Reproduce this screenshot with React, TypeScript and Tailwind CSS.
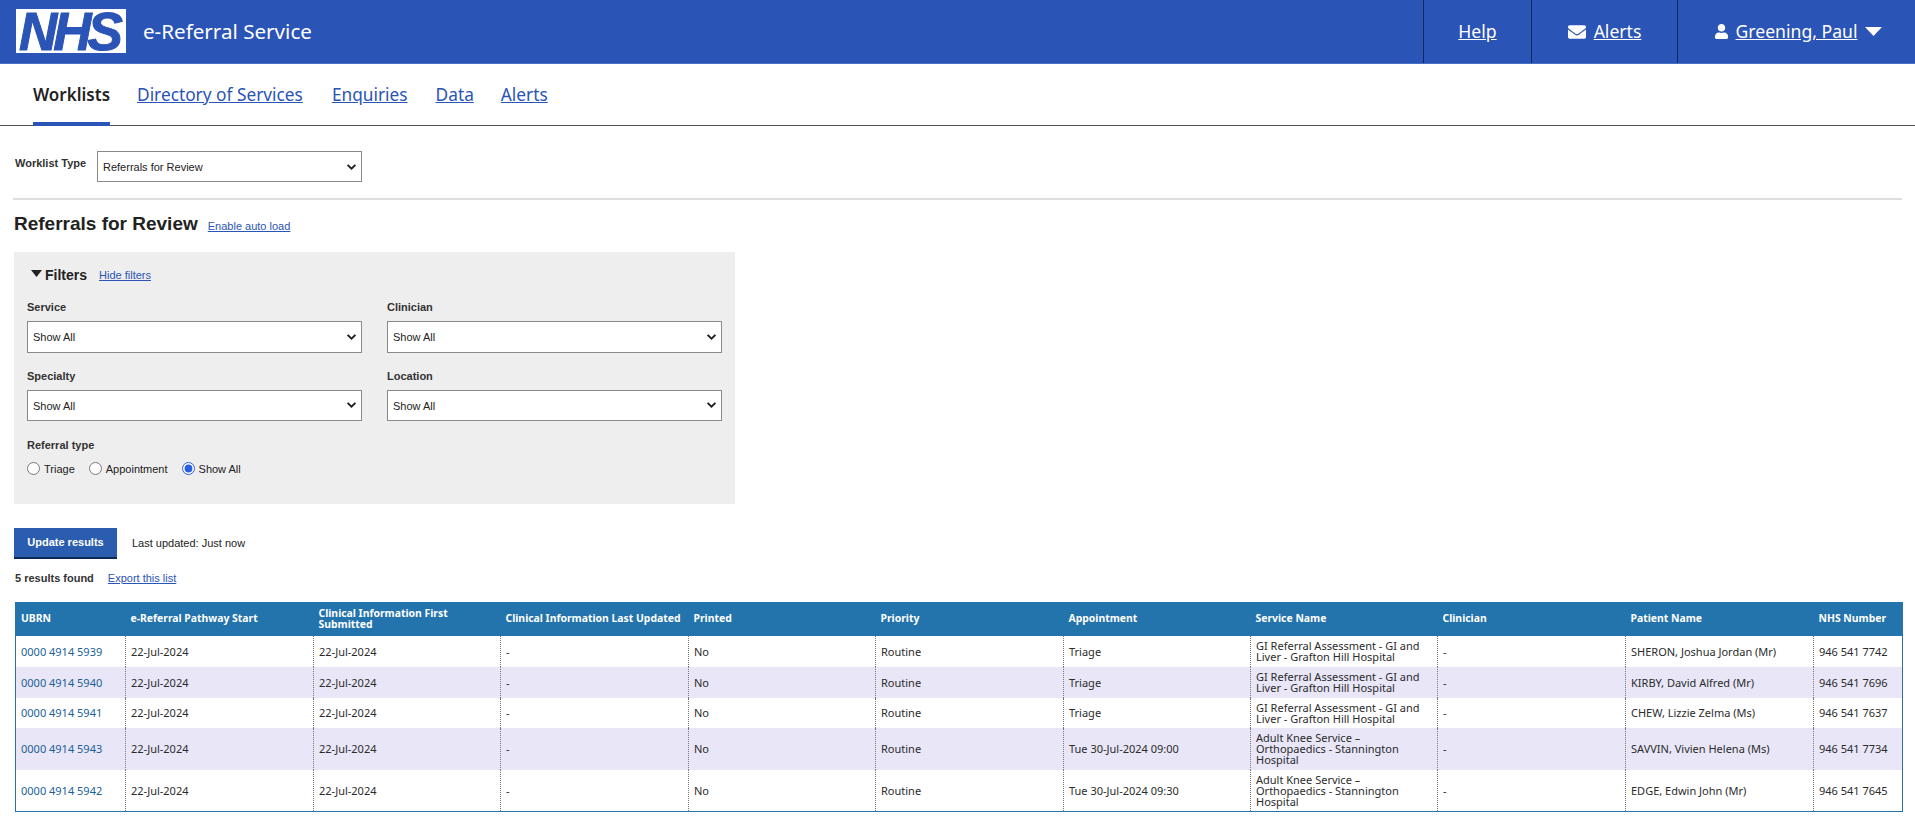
import { FaEnvelope, FaUser } from "react-icons/fa";

type Row = {
  ubrn: string,
  appointment: string,
  service: string[],
  patient: string,
  nhs: string,
}

const GI = ["GI Referral Assessment - GI and", "Liver - Grafton Hill Hospital"];
const KNEE = ["Adult Knee Service –", "Orthopaedics - Stannington", "Hospital"];

const rows: Row[] = [
  { ubrn: "0000 4914 5939", appointment: "Triage", service: GI, patient: "SHERON, Joshua Jordan (Mr)", nhs: "946 541 7742" },
  { ubrn: "0000 4914 5940", appointment: "Triage", service: GI, patient: "KIRBY, David Alfred (Mr)", nhs: "946 541 7696" },
  { ubrn: "0000 4914 5941", appointment: "Triage", service: GI, patient: "CHEW, Lizzie Zelma (Ms)", nhs: "946 541 7637" },
  { ubrn: "0000 4914 5943", appointment: "Tue 30-Jul-2024 09:00", service: KNEE, patient: "SAVVIN, Vivien Helena (Ms)", nhs: "946 541 7734" },
  { ubrn: "0000 4914 5942", appointment: "Tue 30-Jul-2024 09:30", service: KNEE, patient: "EDGE, Edwin John (Mr)", nhs: "946 541 7645" },
];

const headers = [
  { label: "UBRN", w: "w-[110px]" },
  { label: "e-Referral Pathway Start", w: "w-[188px]" },
  { label: "Clinical Information First Submitted", w: "w-[187px]" },
  { label: "Clinical Information Last Updated", w: "w-[188px]" },
  { label: "Printed", w: "w-[187px]" },
  { label: "Priority", w: "w-[188px]" },
  { label: "Appointment", w: "w-[187px]" },
  { label: "Service Name", w: "w-[187px]" },
  { label: "Clinician", w: "w-[188px]" },
  { label: "Patient Name", w: "w-[188px]" },
  { label: "NHS Number", w: "w-[89px]" },
];

const Chevron = () => (
  <svg viewBox="0 0 12 8" className="pointer-events-none absolute right-[5px] top-1/2 h-[7px] w-[11px] -translate-y-1/2">
    <path d="M1.5 1.5 L6 6 L10.5 1.5" fill="none" stroke="#222" strokeWidth="2.2" />
  </svg>
);

const Select = ({ value, className }: { value: string, className: string }) => (
  <div className={`relative ${className}`}>
    <select
      defaultValue={value}
      className="h-full w-full appearance-none border border-[#8a8a8a] bg-white pl-[5px] pt-[2px] text-[11px] text-[#222] outline-none"
    >
      <option>{value}</option>
    </select>
    <Chevron />
  </div>
);

const Field = ({ label, h }: { label: string, h: string }) => (
  <div className="w-[335px]">
    <div className="mb-[7px] h-[13px] text-[11px] font-bold leading-[13px] text-[#333]">{label}</div>
    <Select value="Show All" className={h} />
  </div>
);

const Radio = ({ label, checked }: { label: string, checked?: boolean }) => (
  <label className="flex items-center gap-[4px]">
    <input type="radio" name="referralType" defaultChecked={checked} className="m-0 h-[13px] w-[13px] accent-[#2a5fe0]" />
    <span>{label}</span>
  </label>
);

const linkClass = "text-[11px] text-[#2a54b5] underline";
const cell = "border-l border-dotted border-[#777] px-[5px]";

export default function App() {
  return (
    <div className="min-h-[828px] bg-white font-['Liberation_Sans',Arial,sans-serif] text-[#222]">
      <header className="flex h-[64px] items-stretch border-b border-[#4a6fc4] bg-[#2a54b5] text-white">
        <div className="ml-[16px] mt-[9px] flex h-[44px] w-[110px] items-center justify-center bg-white">
          <span className="pr-[4px] text-[53px] font-bold italic leading-none tracking-[-4px] text-[#2a54b5] [-webkit-text-stroke:1px_#2a54b5]">NHS</span>
        </div>
        <div className="ml-[17px] self-center font-['Noto_Sans',sans-serif] text-[20.6px]">e-Referral Service</div>
        <nav className="ml-auto flex items-stretch font-['Noto_Sans',sans-serif] text-[17.6px]">
          <div className="flex w-[108px] items-center justify-center border-l border-[#14275e]">
            <a className="underline">Help</a>
          </div>
          <div className="flex w-[146px] items-center justify-center gap-[8px] border-l border-[#14275e]">
            <FaEnvelope className="h-[18px] w-[18px]" />
            <a className="underline">Alerts</a>
          </div>
          <div className="flex w-[238px] items-center justify-center gap-[7px] border-l border-[#14275e] pl-[3px]">
            <FaUser className="h-[15px] w-[15px]" />
            <a className="underline">Greening, Paul</a>
            <svg viewBox="0 0 17 9" className="ml-[1px] h-[9px] w-[17px]"><polygon points="0,0 17,0 8.5,9" fill="#fff" /></svg>
          </div>
        </nav>
      </header>

      <nav className="flex h-[62px] items-stretch border-b border-[#555] pl-[33px] font-['Noto_Sans',sans-serif] text-[17.3px] text-[#2a54b5]">
        <a className="-mb-px flex items-center border-b-[4px] border-[#2a54b5] pt-[3px] text-[17px] font-semibold text-[#222]">Worklists</a>
        <a className="ml-[27px] flex items-center underline">Directory of Services</a>
        <a className="ml-[29px] flex items-center underline">Enquiries</a>
        <a className="ml-[28px] flex items-center underline">Data</a>
        <a className="ml-[27px] flex items-center underline">Alerts</a>
      </nav>

      <main className="px-[13px]">
        <div className="flex items-start pl-[2px] pt-[25px]">
          <label className="mt-[6px] w-[82px] text-[11px] font-bold leading-[13px] text-[#333]">Worklist Type</label>
          <Select value="Referrals for Review" className="h-[31px] w-[265px]" />
        </div>
        <div className="mt-[16px] h-[2px] bg-[#dedede]" />

        <div className="flex items-baseline pl-[1px] pt-[12px]">
          <h1 className="text-[19px] font-bold leading-[24px] text-[#222]">Referrals for Review</h1>
          <a className={`ml-[10px] ${linkClass}`}>Enable auto load</a>
        </div>

        <section className="ml-px mt-[16px] h-[252px] w-[721px] bg-[#eeeeee] pl-[13px] pr-[13px] pt-[15px]">
          <div className="flex items-center pl-[4px]">
            <svg viewBox="0 0 11 7" className="mr-[3px] mt-[-4px] h-[7px] w-[11px]"><polygon points="0,0 11,0 5.5,7" fill="#222" /></svg>
            <span className="text-[14px] font-bold leading-[16px]">Filters</span>
            <a className={`ml-[12px] ${linkClass}`}>Hide filters</a>
          </div>
          <div className="mt-[17px] grid grid-cols-[335px_335px] gap-x-[25px] gap-y-[17px]">
            <Field label="Service" h="h-[32px]" />
            <Field label="Clinician" h="h-[32px]" />
            <Field label="Specialty" h="h-[31px]" />
            <Field label="Location" h="h-[31px]" />
          </div>
          <div className="mt-[18px] text-[11px] font-bold leading-[13px] text-[#333]">Referral type</div>
          <div className="mt-[9px] flex gap-[14px] text-[11px]">
            <Radio label="Triage" />
            <Radio label="Appointment" />
            <Radio label="Show All" checked />
          </div>
        </section>

        <div className="ml-px mt-[24px] flex items-center">
          <button className="h-[31px] w-[103px] border-b-2 border-[#0b2b52] bg-[#2a5db0] text-[11px] font-bold text-white">Update results</button>
          <span className="ml-[15px] text-[11px]">Last updated: Just now</span>
        </div>

        <div className="ml-[2px] mt-[13px] flex items-center text-[11px] leading-[13px]">
          <span className="font-bold text-[#333]">5 results found</span>
          <a className={`ml-[14px] ${linkClass}`}>Export this list</a>
        </div>

        <table className="ml-[2px] mt-[17px] w-[1887px] table-fixed border-collapse border border-[#2373ac] font-['Noto_Sans',sans-serif] text-[11px] leading-[11px] text-[#2b2b2b]">
          <thead>
            <tr className="h-[33px] bg-[#2373ac] text-left text-[10.4px] text-white">
              {headers.map((h) => (
                <th key={h.label} className={`${h.w} px-[5px] pb-[1px] font-bold`}>{h.label}</th>
              ))}
            </tr>
          </thead>
          <tbody>
            {rows.map((r, i) => (
              <tr key={r.ubrn} className={`${i > 2 ? "h-[42px]" : i === 2 ? "h-[30px]" : "h-[31px]"} ${i % 2 ? "bg-[#e8e6f7]" : "bg-white"}`}>
                <td className="px-[5px] text-[#1d5f96]">{r.ubrn}</td>
                <td className={cell}>22-Jul-2024</td>
                <td className={cell}>22-Jul-2024</td>
                <td className={cell}>-</td>
                <td className={cell}>No</td>
                <td className={cell}>Routine</td>
                <td className={cell}>{r.appointment}</td>
                <td className={cell}>
                  {r.service.map((line) => <div key={line}>{line}</div>)}
                </td>
                <td className={cell}>-</td>
                <td className={cell}>{r.patient}</td>
                <td className={cell}>{r.nhs}</td>
              </tr>
            ))}
          </tbody>
        </table>
      </main>
    </div>
  )
}
